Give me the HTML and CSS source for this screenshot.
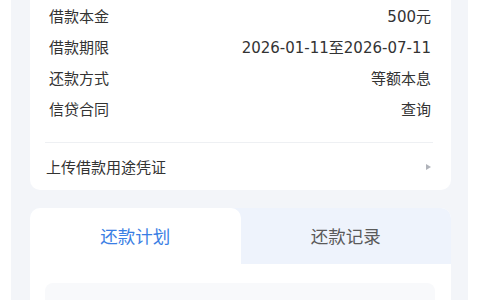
FILE: index.html
```html
<!DOCTYPE html>
<html lang="zh-CN">
<head>
<meta charset="utf-8">
<link rel="stylesheet" href="styles.css">
</head>
<body>
<div class="page">
  <div class="card info">
    <div class="row"><span class="label">借款本金</span><span class="value">500元</span></div>
    <div class="row"><span class="label">借款期限</span><span class="value">2026-01-11至2026-07-11</span></div>
    <div class="row"><span class="label">还款方式</span><span class="value">等额本息</span></div>
    <div class="row"><span class="label">信贷合同</span><span class="value">查询</span></div>
    <div class="divider"></div>
    <div class="link-row"><span class="label">上传借款用途凭证</span><span class="arrow"></span></div>
  </div>
  <div class="card tabs-card">
    <div class="tabs">
      <div class="tab active">还款计划</div>
      <div class="tab">还款记录</div>
    </div>
    <div class="tab-body">
      <div class="plan-box"></div>
    </div>
  </div>
</div>
</body>
</html>
```
FILE: styles.css
```css
html, body {
  margin: 0;
  padding: 0;
  background: #ffffff;
}
body {
  font-family: "DejaVu Sans", "Noto Sans CJK SC", sans-serif;
  color: #333333;
  width: 480px;
  height: 300px;
  overflow: hidden;
}
.page {
  margin-left: 11px;
  width: 457px;
  height: 300px;
  background: #f3f5f9;
  padding: 0 17px 0 19px;
  box-sizing: border-box;
  display: flex;
  flex-direction: column;
  gap: 18px;
}
.card {
  background: #ffffff;
  border-radius: 0 0 10px 10px;
}
.info {
  padding: 0 18px 0 15px;
}
.row {
  height: 31px;
  display: flex;
  align-items: center;
  justify-content: space-between;
  padding: 0 2px 0 4px;
  font-size: 15px;
}
.label {
  font-size: 15px;
  color: #333333;
}
.value {
  font-size: 15px;
  color: #333333;
}
.divider {
  margin-top: 18px;
  height: 1px;
  background: #eef0f3;
}
.link-row {
  height: 47px;
  display: flex;
  align-items: center;
  justify-content: space-between;
  padding: 0 0 0 1px;
}
.link-row .label {
  font-size: 15px;
}
.arrow {
  width: 0;
  height: 0;
  border-left: 5px solid #b0b3ba;
  border-top: 3.5px solid transparent;
  border-bottom: 3.5px solid transparent;
  margin-right: 2px;
}
.tabs-card {
  border-radius: 10px 10px 0 0;
  flex: 1;
  overflow: hidden;
}
.tabs {
  display: flex;
  height: 56px;
  background: #eef3fc;
}
.tab {
  flex: 1;
  display: flex;
  align-items: center;
  justify-content: center;
  font-size: 17.5px;
  color: #5a5a5a;
  padding-bottom: 2px;
}
.tab.active {
  background: #ffffff;
  color: #3a7ee4;
  border-radius: 0 10px 0 0;
}
.tab:last-child {
  border-radius: 0 10px 0 0;
}
.tab-body {
  padding: 19px 16px 0 15px;
}
.plan-box {
  height: 40px;
  background: #f8f9fb;
  border-radius: 8px;
}
```
